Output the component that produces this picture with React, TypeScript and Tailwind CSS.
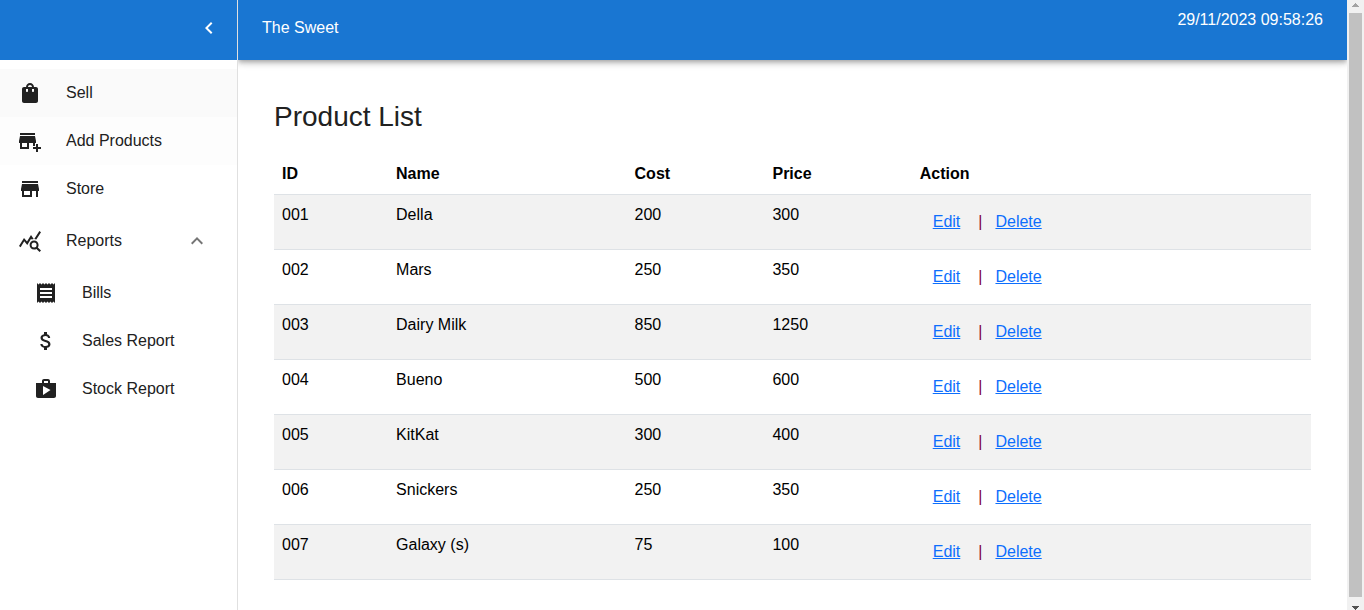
import type { ReactNode } from "react";
import {
  MdAddBusiness,
  MdAttachMoney,
  MdChevronLeft,
  MdExpandLess,
  MdQueryStats,
  MdReceipt,
  MdShop,
  MdShoppingBag,
  MdStore,
} from "react-icons/md";

type Product = { id: string; name: string; cost: number; price: number };

const products: Product[] = [
  { id: "001", name: "Della", cost: 200, price: 300 },
  { id: "002", name: "Mars", cost: 250, price: 350 },
  { id: "003", name: "Dairy Milk", cost: 850, price: 1250 },
  { id: "004", name: "Bueno", cost: 500, price: 600 },
  { id: "005", name: "KitKat", cost: 300, price: 400 },
  { id: "006", name: "Snickers", cost: 250, price: 350 },
  { id: "007", name: "Galaxy (s)", cost: 75, price: 100 },
];

function NavItem({ icon, label, className = "pl-[18px]" }: { icon: ReactNode; label: string; className?: string }) {
  return (
    <li>
      <a href="#" className={`flex h-12 items-center gap-6 text-2xl ${className}`}>
        {icon}
        <span className="text-base">{label}</span>
      </a>
    </li>
  );
}

function Sidebar() {
  return (
    <aside className="z-10 flex w-[238px] shrink-0 flex-col border-r border-[#e0e0e0] bg-white">
      <div className="flex h-15 items-start justify-end bg-[#1976d2] pt-4 pr-4">
        <button type="button" aria-label="Collapse menu" className="text-2xl text-white">
          <MdChevronLeft />
        </button>
      </div>
      <nav className="pt-[9px]">
        <ul>
          <NavItem icon={<MdShoppingBag />} label="Sell" className="bg-[#fafafa] pl-[18px]" />
          <NavItem icon={<MdAddBusiness />} label="Add Products" className="bg-[#fdfdfd] pl-[18px]" />
          <NavItem icon={<MdStore />} label="Store" />
          <li>
            <button
              type="button"
              aria-expanded="true"
              className="flex h-14 w-full items-center gap-6 pr-7 pl-[18px] text-left text-2xl"
            >
              <MdQueryStats />
              <span className="flex-1 text-base">Reports</span>
              <MdExpandLess className="text-[#757575]" />
            </button>
            <ul>
              <NavItem icon={<MdReceipt />} label="Bills" className="pl-[34px]" />
              <NavItem icon={<MdAttachMoney />} label="Sales Report" className="pl-[34px]" />
              <NavItem icon={<MdShop />} label="Stock Report" className="pl-[34px]" />
            </ul>
          </li>
        </ul>
      </nav>
    </aside>
  );
}

function Header() {
  return (
    <header className="flex h-15 items-start justify-between bg-[#1976d2] px-6 text-white shadow-[0_2px_4px_-1px_rgba(0,0,0,0.2),0_4px_5px_0_rgba(0,0,0,0.14),0_1px_10px_0_rgba(0,0,0,0.12)]">
      <span className="pt-4 font-medium">The Sweet</span>
      <time className="pt-2 font-medium">29/11/2023 09:58:26</time>
    </header>
  );
}

function ProductTable() {
  return (
    <table className="w-full table-fixed border-collapse text-left text-black">
      <colgroup>
        <col className="w-[11%]" />
        <col className="w-[23%]" />
        <col className="w-[13.3%]" />
        <col className="w-[14.2%]" />
        <col />
      </colgroup>
      <thead>
        <tr className="border-b border-[#dee2e6] font-bold">
          <th className="p-2">ID</th>
          <th className="p-2">Name</th>
          <th className="p-2">Cost</th>
          <th className="p-2">Price</th>
          <th className="p-2">Action</th>
        </tr>
      </thead>
      <tbody>
        {products.map((p) => (
          <tr key={p.id} className="border-b border-[#dee2e6] align-top odd:bg-[#f2f2f2]">
            <td className="p-2">{p.id}</td>
            <td className="p-2">{p.name}</td>
            <td className="p-2">{p.cost}</td>
            <td className="p-2">{p.price}</td>
            <td className="p-2">
              <div className="flex h-[38px] items-center">
                <a href="#" className="px-[13px] text-[#0d6efd] underline">
                  Edit
                </a>
                <span className="pl-[5px] text-[#800040]">|</span>
                <a href="#" className="px-[13px] text-[#0d6efd] underline">
                  Delete
                </a>
              </div>
            </td>
          </tr>
        ))}
      </tbody>
    </table>
  );
}

function ScrollRail() {
  return (
    <div aria-hidden="true" className="z-10 flex w-[17px] shrink-0 flex-col items-center bg-[#f1f1f1]">
      <div className="flex h-[13px] items-start pt-[3px]">
        <svg width="7" height="4" viewBox="0 0 7 4" fill="#a3a3a3" shapeRendering="crispEdges">
          <path d="M3 0h1v1h1v1h1v1h1v1H0V3h1V2h1V1h1z" />
        </svg>
      </div>
      <div className="w-[13px] flex-1 bg-[#c1c1c1]" />
      <div className="flex h-[13px] items-end">
        <svg width="7" height="4" viewBox="0 0 7 4" fill="#505050" shapeRendering="crispEdges">
          <path d="M0 0h7v1H6v1H5v1H4v1H3V3H2V2H1V1H0z" />
        </svg>
      </div>
    </div>
  );
}

export default function App() {
  return (
    <div className="flex min-h-screen bg-white font-['Liberation_Sans',Arial,sans-serif] text-base text-[#212121]">
      <Sidebar />
      <div className="min-w-0 flex-1">
        <Header />
        <main className="px-9 pt-10">
          <h1 className="mb-5 text-[28px] leading-[34px]">Product List</h1>
          <ProductTable />
        </main>
      </div>
      <ScrollRail />
    </div>
  );
}
